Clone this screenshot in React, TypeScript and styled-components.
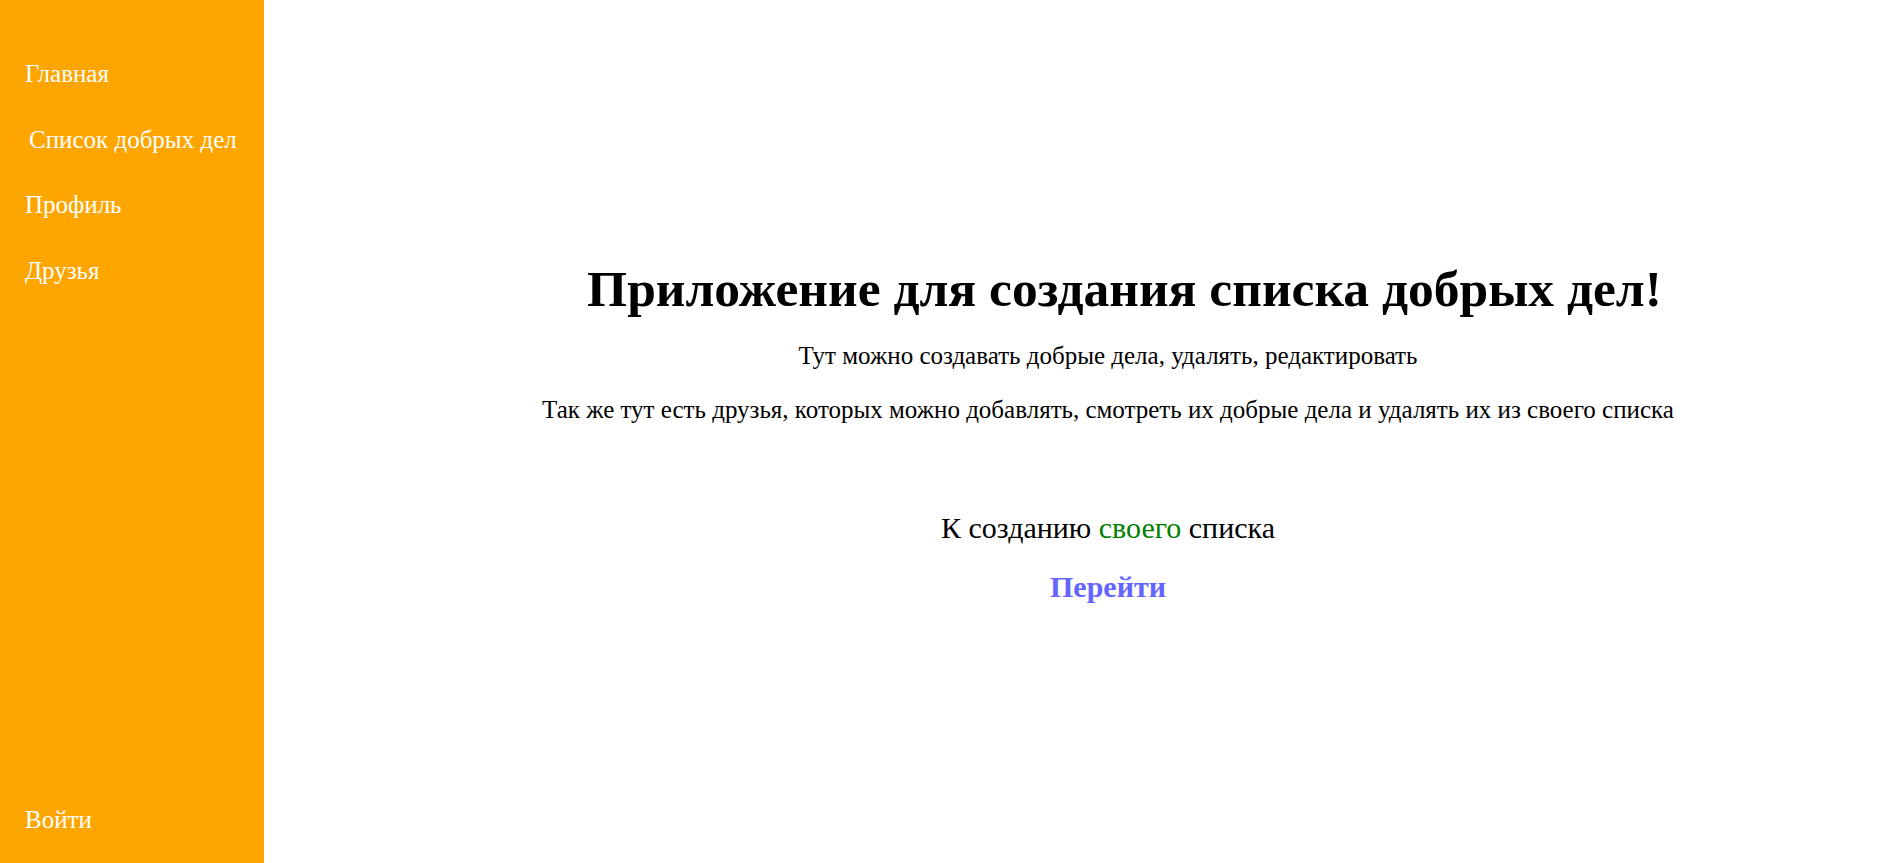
import React from "react";
import styled, { createGlobalStyle } from "styled-components";

const Global = createGlobalStyle`
  html, body { margin: 0; padding: 0; }
  body { font-family: "Liberation Serif", "Times New Roman", serif; background: #fff; }
`;

const Layout = styled.div`
  display: flex;
  width: 100%;
  height: 100vh;
`;

const Sidebar = styled.nav`
  width: 264px;
  flex: 0 0 264px;
  background: #ffa500;
  display: flex;
  flex-direction: column;
  justify-content: space-between;
  padding: 60px 0 28px 25px;
  box-sizing: border-box;
`;

const NavList = styled.div`
  display: flex;
  flex-direction: column;
  gap: 36.8px;
`;

const NavLink = styled.a<{ $indent?: number }>`
  color: #fff;
  font-size: 25px;
  line-height: 1.15;
  text-decoration: none;
  padding-left: ${(p) => p.$indent ?? 0}px;
`;

const Main = styled.main`
  flex: 1;
  display: flex;
  flex-direction: column;
  align-items: center;
  justify-content: center;
  padding-left: 50px;
  text-align: center;
`;

const Title = styled.h1`
  font-size: 51.5px;
  line-height: 1.15;
  font-weight: bold;
  margin: 0 0 24px;
  padding-left: 33px;
`;

const Text = styled.p`
  font-size: 25px;
  line-height: 1.15;
  margin: 0 0 25px;
`;

const CallToAction = styled.div`
  font-size: 30px;
  line-height: 1.15;
  margin-top: 61.5px;
`;

const Accent = styled.span`
  color: #008000;
`;

const GoLink = styled.a`
  font-size: 30px;
  line-height: 1.15;
  font-weight: bold;
  color: #6464ff;
  text-decoration: none;
  margin-top: 24.5px;
`;

export default function App() {
  return (
    <>
      <Global />
      <Layout>
        <Sidebar>
          <NavList>
            <NavLink href="#">Главная</NavLink>
            <NavLink href="#" $indent={4}>Список добрых дел</NavLink>
            <NavLink href="#">Профиль</NavLink>
            <NavLink href="#">Друзья</NavLink>
          </NavList>
          <NavLink href="#">Войти</NavLink>
        </Sidebar>
        <Main>
          <Title>Приложение для создания списка добрых дел!</Title>
          <Text>Тут можно создавать добрые дела, удалять, редактировать</Text>
          <Text>Так же тут есть друзья, которых можно добавлять, смотреть их добрые дела и удалять их из своего списка</Text>
          <CallToAction>
            К созданию <Accent>своего</Accent> списка
          </CallToAction>
          <GoLink href="#">Перейти</GoLink>
        </Main>
      </Layout>
    </>
  );
}
